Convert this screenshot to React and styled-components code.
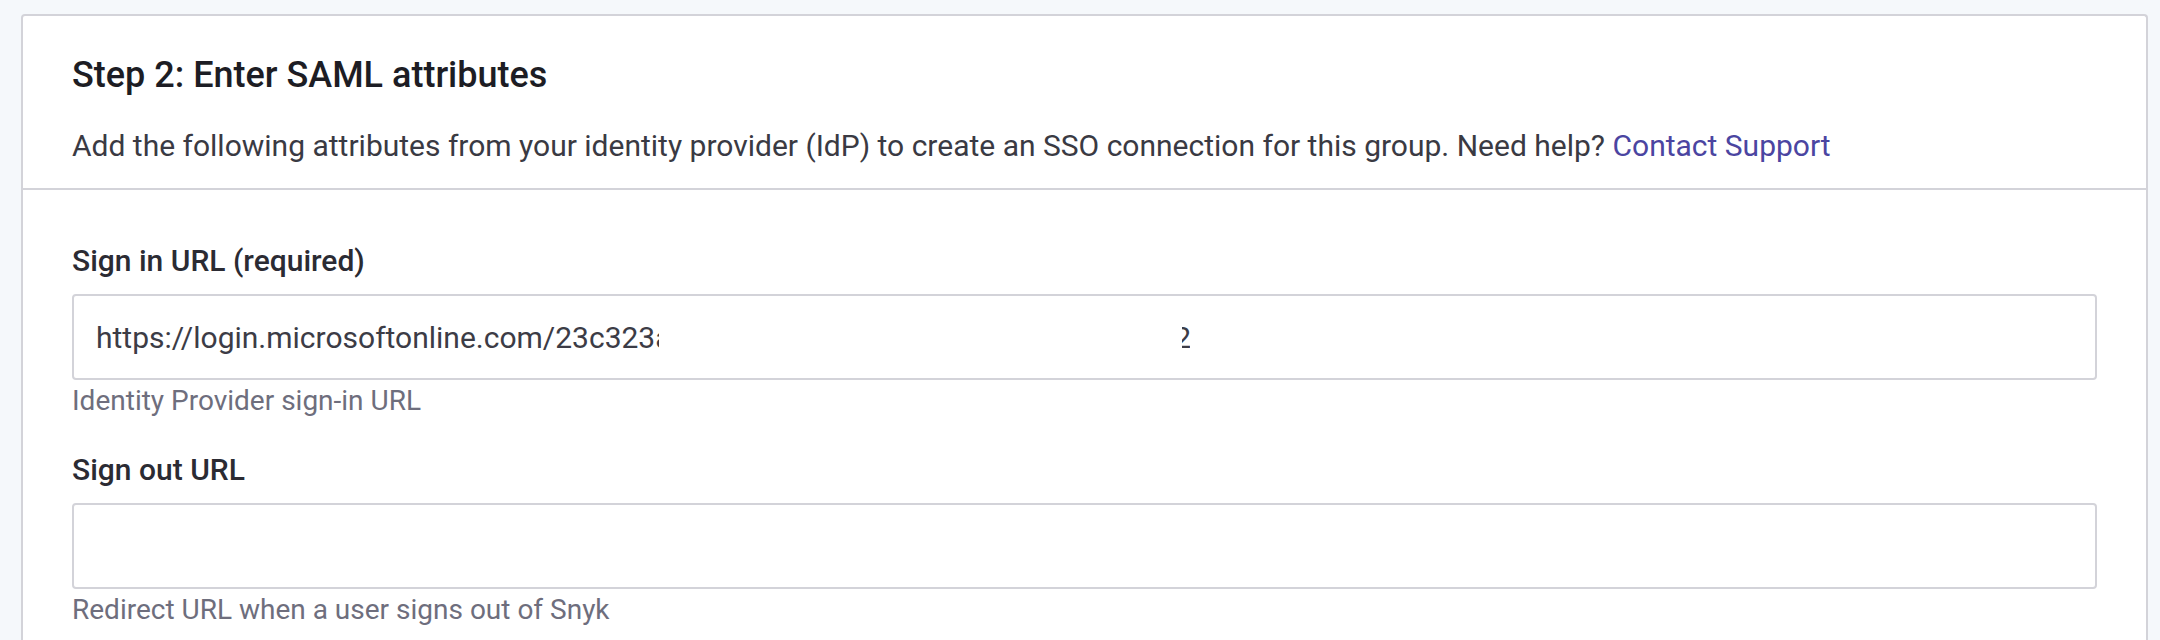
import React from "react";
import styled, { createGlobalStyle } from "styled-components";

const Global = createGlobalStyle`
  html, body { margin: 0; padding: 0; background: #f5f8fb; }
  body { font-family: Roboto, "Liberation Sans", Arial, sans-serif; -webkit-font-smoothing: antialiased; }
`;

const Page = styled.div`
  padding: 14px 12px 0 21px;
  height: 640px;
  box-sizing: border-box;
  overflow: hidden;
`;

const Card = styled.section`
  background: #ffffff;
  border: 2px solid #d3d3d9;
  border-bottom: none;
  border-radius: 4px 4px 0 0;
  min-height: 700px;
`;

const Header = styled.header`
  padding: 38px 49px 22px;
  border-bottom: 2px solid #d3d3d9;
`;

const Title = styled.h2`
  margin: 0;
  font-size: 36px;
  line-height: 42px;
  font-weight: 500;
  color: #1d1d24;
`;

const Description = styled.p`
  margin: 30px 0 0;
  font-size: 30px;
  line-height: 40px;
  color: #3a3a43;
`;

const Link = styled.a`
  color: #4b45a1;
  text-decoration: none;
`;

const Body = styled.div`
  padding: 51px 49px 0;
  display: flex;
  flex-direction: column;
  gap: 31px;
`;

const Field = styled.div`
  display: flex;
  flex-direction: column;
`;

const Label = styled.label`
  font-size: 30px;
  line-height: 40px;
  font-weight: 500;
  color: #2b2b33;
  margin-bottom: 13px;
`;

const InputBox = styled.div`
  height: 86px;
  box-sizing: border-box;
  border: 2px solid #d3d3d9;
  border-radius: 4px;
  padding: 0 22px;
  display: flex;
  align-items: center;
  font-size: 30px;
  color: #3c3c46;
  white-space: nowrap;
  overflow: hidden;
`;

const Clip = styled.span`
  display: inline-block;
  width: ${(p) => p.$w}px;
  overflow: hidden;
`;

const ClipRight = styled.span`
  display: inline-block;
  width: ${(p) => p.$w}px;
  overflow: hidden;
  & > span {
    display: inline-block;
    margin-left: -${(p) => p.$shift}px;
  }
`;

const Redacted = styled.span`
  display: inline-block;
  width: ${(p) => p.$w}px;
`;

const Helper = styled.div`
  margin-top: 3px;
  font-size: 28px;
  line-height: 36px;
  color: #6e6e7d;
`;

export default function App() {
  return (
    <>
      <Global />
      <Page>
        <Card>
          <Header>
            <Title>Step 2: Enter SAML attributes</Title>
            <Description>
              Add the following attributes from your identity provider (IdP) to create an SSO
              connection for this group. Need help? <Link href="#">Contact Support</Link>
            </Description>
          </Header>
          <Body>
            <Field>
              <Label>Sign in URL (required)</Label>
              <InputBox>
                <span>https://login.microsoftonline.com/23c323</span>
                <Clip $w={4}>a</Clip>
                <Redacted $w={523} />
                <ClipRight $w={8} $shift={8}>
                  <span>2</span>
                </ClipRight>
              </InputBox>
              <Helper>Identity Provider sign-in URL</Helper>
            </Field>
            <Field>
              <Label>Sign out URL</Label>
              <InputBox />
              <Helper>Redirect URL when a user signs out of Snyk</Helper>
            </Field>
          </Body>
        </Card>
      </Page>
    </>
  );
}
